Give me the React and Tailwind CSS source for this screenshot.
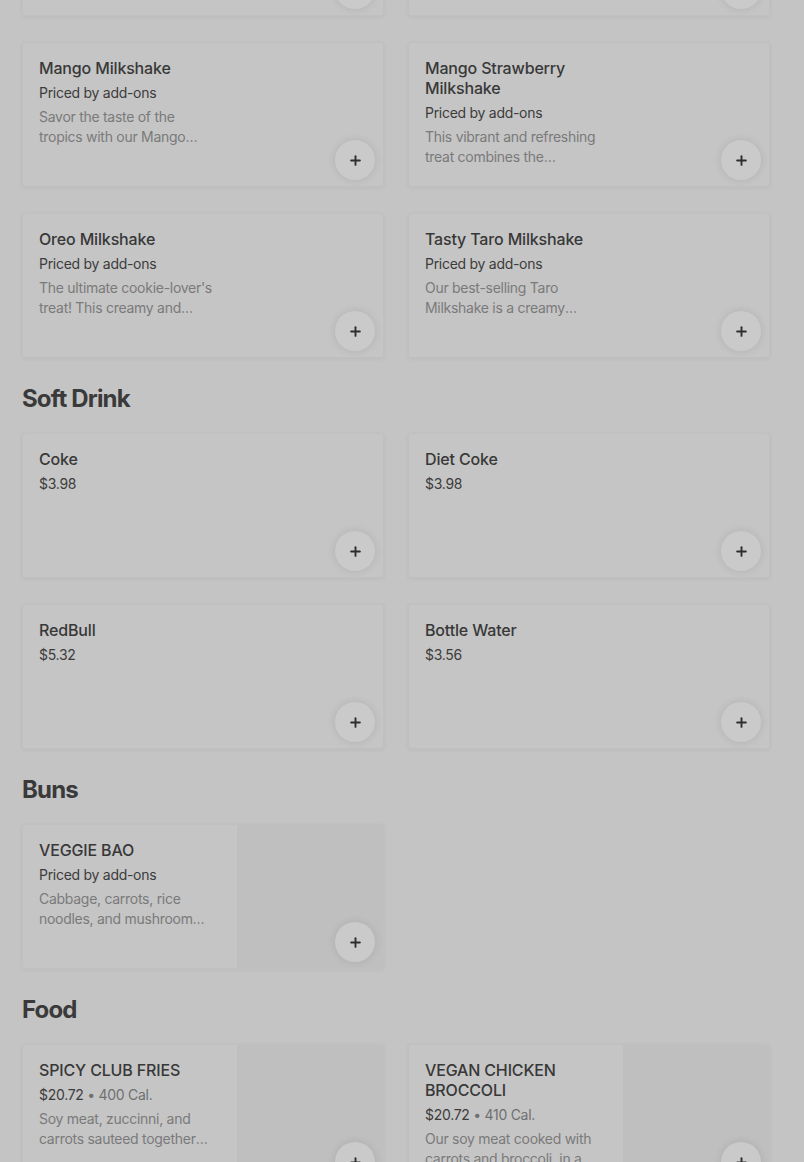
import { Plus } from "lucide-react";

const topRow = [
  { name: "Chocolate Milkshake", price: "Priced by add-ons", desc: "Rich and creamy chocolate blended to perfection" },
  { name: "Coffee Milkshake", price: "Priced by add-ons", desc: "Smooth coffee flavor blended with ice cream" },
];

const milkshakes = [
  { name: "Mango Milkshake", price: "Priced by add-ons", desc: "Savor the taste of the tropics with our Mango Milkshake" },
  { name: "Mango Strawberry Milkshake", price: "Priced by add-ons", desc: "This vibrant and refreshing treat combines the sweetness of mango" },
  { name: "Oreo Milkshake", price: "Priced by add-ons", desc: "The ultimate cookie-lover's treat! This creamy and crunchy shake" },
  { name: "Tasty Taro Milkshake", price: "Priced by add-ons", desc: "Our best-selling Taro Milkshake is a creamy delightful drink" },
];

const sections = [
  {
    title: "Soft Drink",
    items: [
      { name: "Coke", amount: "$3.98" },
      { name: "Diet Coke", amount: "$3.98" },
      { name: "RedBull", amount: "$5.32" },
      { name: "Bottle Water", amount: "$3.56" },
    ],
  },
  {
    title: "Buns",
    items: [
      { name: "VEGGIE BAO", price: "Priced by add-ons", desc: "Cabbage, carrots, rice noodles, and mushroom wrapped in a soft bun", image: true },
    ],
  },
  {
    title: "Food",
    items: [
      { name: "SPICY CLUB FRIES", amount: "$20.72", cal: "400 Cal.", desc: "Soy meat, zuccinni, and carrots sauteed together with spices", image: true },
      { name: "VEGAN CHICKEN BROCCOLI", amount: "$20.72", cal: "410 Cal.", desc: "Our soy meat cooked with carrots and broccoli, in a savory sauce", image: true },
    ],
  },
];

const ItemCard = ({ item }) => (
  <div className="relative flex h-[145px] overflow-hidden rounded-[3px] border border-[#c0c0c0] bg-[#c5c5c5] shadow-[0_1px_4px_rgba(0,0,0,0.05)]">
    <div className="w-[214px] shrink-0 pl-4 pr-[22px] pt-[15px]">
      <h3 className="text-[16px] font-medium leading-5 tracking-[-0.01em] text-[#383838]">{item.name}</h3>
      {item.price && (
        <p className="mt-[5px] text-[14px] leading-5 tracking-[-0.02em] text-[#3c3c3c]">{item.price}</p>
      )}
      {item.amount && (
        <p className="mt-[5px] text-[14px] leading-5 tracking-[-0.02em] text-[#3c3c3c]">
          {item.amount}
          {item.cal && <span className="text-[#707070]"> • {item.cal}</span>}
        </p>
      )}
      {item.desc && (
        <p className="mt-1 line-clamp-2 text-[14px] leading-5 tracking-[-0.02em] text-[#7a7a7a]">{item.desc}</p>
      )}
    </div>
    {item.image && <div className="flex-1 bg-[#bfbfbf]" />}
    <button className="absolute bottom-[6px] right-2 flex h-10 w-10 items-center justify-center rounded-full bg-[#cacaca] text-[#2e2e2e] shadow-[0_0_8px_rgba(0,0,0,0.1)]">
      <Plus size={15} strokeWidth={3} />
    </button>
  </div>
);

export default function App() {
  return (
    <div
      className="min-h-screen overflow-hidden bg-[#c4c4c4] pl-[22px]"
      style={{ fontFamily: "Inter, 'Noto Sans', sans-serif" }}
    >
      <div className="w-[748px]">
        <div className="-mt-[129px] grid grid-cols-2 gap-x-6 gap-y-[26px]">
          {topRow.map((item) => (
            <ItemCard key={item.name} item={item} />
          ))}
          {milkshakes.map((item) => (
            <ItemCard key={item.name} item={item} />
          ))}
        </div>
        {sections.map((section) => (
          <section key={section.title}>
            <h2 className="mt-[25px] mb-[18px] text-[24px] font-bold leading-8 tracking-[-0.035em] text-[#3a3a3a]">
              {section.title}
            </h2>
            <div className="grid grid-cols-2 gap-x-6 gap-y-[26px]">
              {section.items.map((item) => (
                <ItemCard key={item.name} item={item} />
              ))}
            </div>
          </section>
        ))}
      </div>
    </div>
  );
}
